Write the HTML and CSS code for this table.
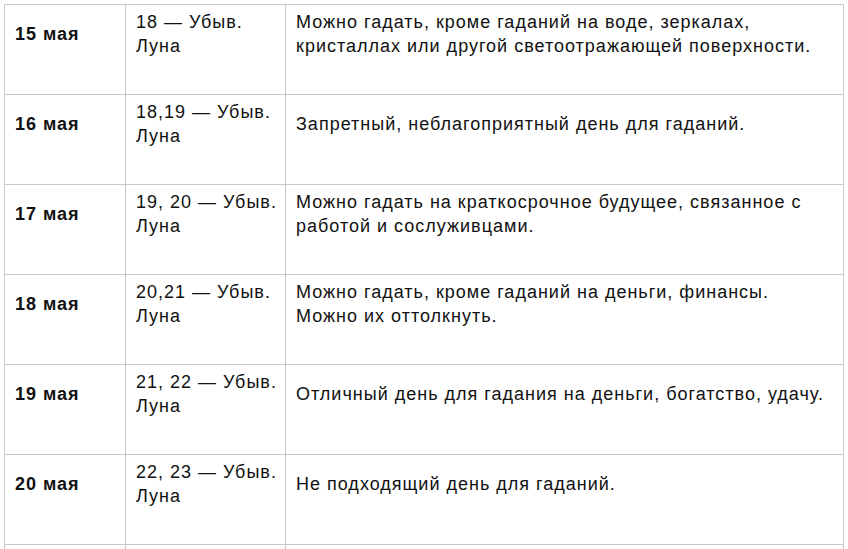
FILE: index.html
```html
<!DOCTYPE html>
<html lang="ru">
<head>
<meta charset="utf-8">
<title>Календарь гаданий</title>
<link rel="stylesheet" href="styles.css">
</head>
<body>
<div class="page">
<table class="moon-table">
  <colgroup>
    <col class="c-date">
    <col class="c-moon">
    <col class="c-desc">
  </colgroup>
  <tbody>
    <tr>
      <td class="date">15 мая</td>
      <td class="moon">18 — Убыв. Луна</td>
      <td class="desc">Можно гадать, кроме гаданий на воде, зеркалах, кристаллах или другой светоотражающей поверхности.</td>
    </tr>
    <tr>
      <td class="date">16 мая</td>
      <td class="moon">18,19 — Убыв. Луна</td>
      <td class="desc">Запретный, неблагоприятный день для гаданий.</td>
    </tr>
    <tr>
      <td class="date">17 мая</td>
      <td class="moon">19, 20 — Убыв. Луна</td>
      <td class="desc">Можно гадать на краткосрочное будущее, связанное с работой и сослуживцами.</td>
    </tr>
    <tr>
      <td class="date">18 мая</td>
      <td class="moon">20,21 — Убыв. Луна</td>
      <td class="desc">Можно гадать, кроме гаданий на деньги, финансы. Можно их оттолкнуть.</td>
    </tr>
    <tr>
      <td class="date">19 мая</td>
      <td class="moon">21, 22 — Убыв. Луна</td>
      <td class="desc">Отличный день для гадания на деньги, богатство, удачу.</td>
    </tr>
    <tr>
      <td class="date">20 мая</td>
      <td class="moon">22, 23 — Убыв. Луна</td>
      <td class="desc">Не подходящий день для гаданий.</td>
    </tr>
    <tr class="next">
      <td class="date"></td>
      <td class="moon"></td>
      <td class="desc"></td>
    </tr>
  </tbody>
</table>
</div>
</body>
</html>
```

FILE: styles.css
```css
html, body {
  margin: 0;
  padding: 0;
  background: #fff;
}

.page {
  padding: 4px 0 0 4px;
}

.moon-table {
  border-collapse: collapse;
  table-layout: fixed;
  width: 839px;
  font-family: "Liberation Sans", Arial, sans-serif;
  font-size: 18px;
  line-height: 24px;
  letter-spacing: 1px;
  color: #111;
}

.c-date { width: 121px; }
.c-moon { width: 160px; }
.c-desc { width: 558px; }

.moon-table td {
  border: 1px solid #c8c8c8;
  padding: 5px 10px 36px 10px;
  vertical-align: middle;
  height: 48px;
}

.moon-table td.moon {
  padding-right: 2px;
}

.moon-table td.date {
  font-weight: bold;
}
```
